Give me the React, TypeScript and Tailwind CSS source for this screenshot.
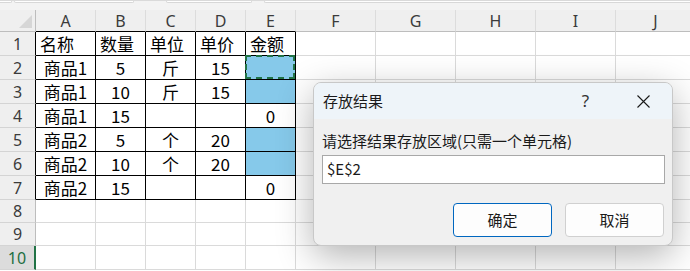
import React from "react";

const cols = [
  { l: "A", w: 60 },
  { l: "B", w: 50 },
  { l: "C", w: 50 },
  { l: "D", w: 50 },
  { l: "E", w: 50 },
  { l: "F", w: 80 },
  { l: "G", w: 80 },
  { l: "H", w: 80 },
  { l: "I", w: 80 },
  { l: "J", w: 80 },
];

const rowHeights = [24, 24, 24, 24, 24, 24, 24, 23, 23, 24];

// data for A1:E7, "blue" marks the filled 金额 cells
const data: (string | null)[][] = [
  ["名称", "数量", "单位", "单价", "金额"],
  ["商品1", "5", "斤", "15", "blue"],
  ["商品1", "10", "斤", "15", "blue"],
  ["商品1", "15", "", "", "0"],
  ["商品2", "5", "个", "20", "blue"],
  ["商品2", "10", "个", "20", "blue"],
  ["商品2", "15", "", "", "0"],
];

const headFont = { fontFamily: '"Noto Sans", "Open Sans", sans-serif' };
const cellFont = { fontFamily: '"Noto Sans CJK SC", "Noto Sans", sans-serif' };

function Dialog() {
  return (
    <div
      className="absolute left-[313px] top-[82px] w-[360px] h-[164px] rounded-lg border border-[#c8c8c8] bg-[#f0f0f0] shadow-[0_10px_36px_rgba(0,0,0,0.3)] flex flex-col overflow-hidden"
      style={cellFont}
    >
      <div className="h-[36px] bg-[#eef4f9] flex items-center pl-[9px] pr-[6px] text-[15px] text-[#1a1a1a]">
        <span className="flex-1">存放结果</span>
        <span className="w-[39px] text-center text-[17px] text-[#333]" style={headFont}>?</span>
        <span className="w-[15px]" />
        <span className="w-[46px] flex items-center justify-center">
          <svg width="13" height="13" viewBox="0 0 13 13">
            <path d="M0.5 0.5 L12.5 12.5 M12.5 0.5 L0.5 12.5" stroke="#1a1a1a" strokeWidth="1.1" fill="none" />
          </svg>
        </span>
      </div>
      <div className="flex flex-col pt-[12px] px-[8px]">
        <div className="text-[15px] leading-[20px] text-[#1a1a1a]">请选择结果存放区域(只需一个单元格)</div>
        <div className="mt-[4px] mr-[-1px] h-[29px] bg-white border border-[#a8a8a8] flex items-center pl-[4px] text-[15px] text-[#1a1a1a]">
          $E$2
        </div>
        <div className="mt-[19px] flex justify-end gap-[13px]">
          <button className="w-[99px] h-[34px] rounded-[4px] border border-[#0067c0] bg-[#fdfdfd] text-[15px] text-[#1a1a1a]">
            确定
          </button>
          <button className="w-[99px] h-[34px] rounded-[4px] border border-[#d0d0d0] bg-[#fdfdfd] text-[15px] text-[#1a1a1a]">
            取消
          </button>
        </div>
      </div>
    </div>
  );
}

export default function App() {
  return (
    <div className="relative w-[690px] h-[271px] overflow-hidden bg-white">
      {/* formula bar remnant */}
      <div className="h-[10px] bg-[#f3f3f3] border-t border-[#dadada] flex gap-[2px]">
        <div className="w-[12px] h-[2px] bg-white border-b border-r border-[#d8d8d8] rounded-br" />
        <div className="w-[120px] h-[2px] bg-white border-b border-l border-r border-[#d8d8d8] rounded-b" />
        <div className="w-[28px]" />
        <div className="w-[86px] h-[2px] bg-white border-b border-l border-r border-[#d8d8d8] rounded-b" />
        <div className="w-[8px]" />
        <div className="flex-1 h-[2px] bg-white border-b border-l border-[#d8d8d8] rounded-bl" />
      </div>

      {/* column headers */}
      <div className="flex h-[22px]" style={headFont}>
        <div className="w-[36px] shrink-0 bg-[#efefef] border-r border-b border-[#bdbdbd] flex items-end justify-end pr-[3px] pb-[3px]">
          <svg width="13" height="13" viewBox="0 0 13 13">
            <path d="M13 0 L13 13 L0 13 Z" fill="#d6d6d6" />
          </svg>
        </div>
        {cols.map((c, i) => (
          <div
            key={c.l}
            style={{ width: c.w }}
            className={`shrink-0 bg-[#efefef] border-r border-r-[#dcdcdc] border-b flex items-center justify-center text-[16px] text-[#3b3b3b] ${
              i < 5 ? "border-b-black" : "border-b-[#bdbdbd]"
            }`}
          >
            {c.l}
          </div>
        ))}
      </div>

      {/* rows */}
      {rowHeights.map((h, r) => {
        const inData = r < 7;
        const active = r === 9;
        return (
          <div key={r} className="flex" style={{ height: h }}>
            <div
              className={`w-[36px] shrink-0 flex items-center justify-center text-[16px] border-b ${
                active
                  ? "bg-[#dcdcdc] border-r-2 border-r-[#217346] border-b-[#d4d4d4] text-[#1e6e42]"
                  : inData
                  ? "bg-[#efefef] border-r border-r-black border-b-[#d4d4d4] text-[#3b3b3b]"
                  : "bg-[#efefef] border-r border-r-[#bdbdbd] border-b-[#d4d4d4] text-[#3b3b3b]"
              }`}
              style={headFont}
            >
              {r + 1}
            </div>
            {cols.map((c, ci) => {
              const dataCell = inData && ci < 5;
              const v = dataCell ? data[r][ci] : null;
              const blue = v === "blue";
              return (
                <div
                  key={c.l}
                  style={{ width: c.w, ...cellFont }}
                  className={`relative shrink-0 border-r border-b flex items-center text-[17px] text-black ${
                    dataCell ? "border-black" : "border-[#dadada]"
                  } ${r === 0 ? "justify-start pl-[4px]" : "justify-center"} ${blue ? "bg-[#86c9ea]" : ""}`}
                >
                  {!blue && v}
                  {r === 1 && ci === 4 && (
                    <div className="absolute left-[-1px] top-[-1px] right-0 bottom-0 border-2 border-dashed border-[#217346]" />
                  )}
                </div>
              );
            })}
          </div>
        );
      })}

      <Dialog />
    </div>
  );
}
